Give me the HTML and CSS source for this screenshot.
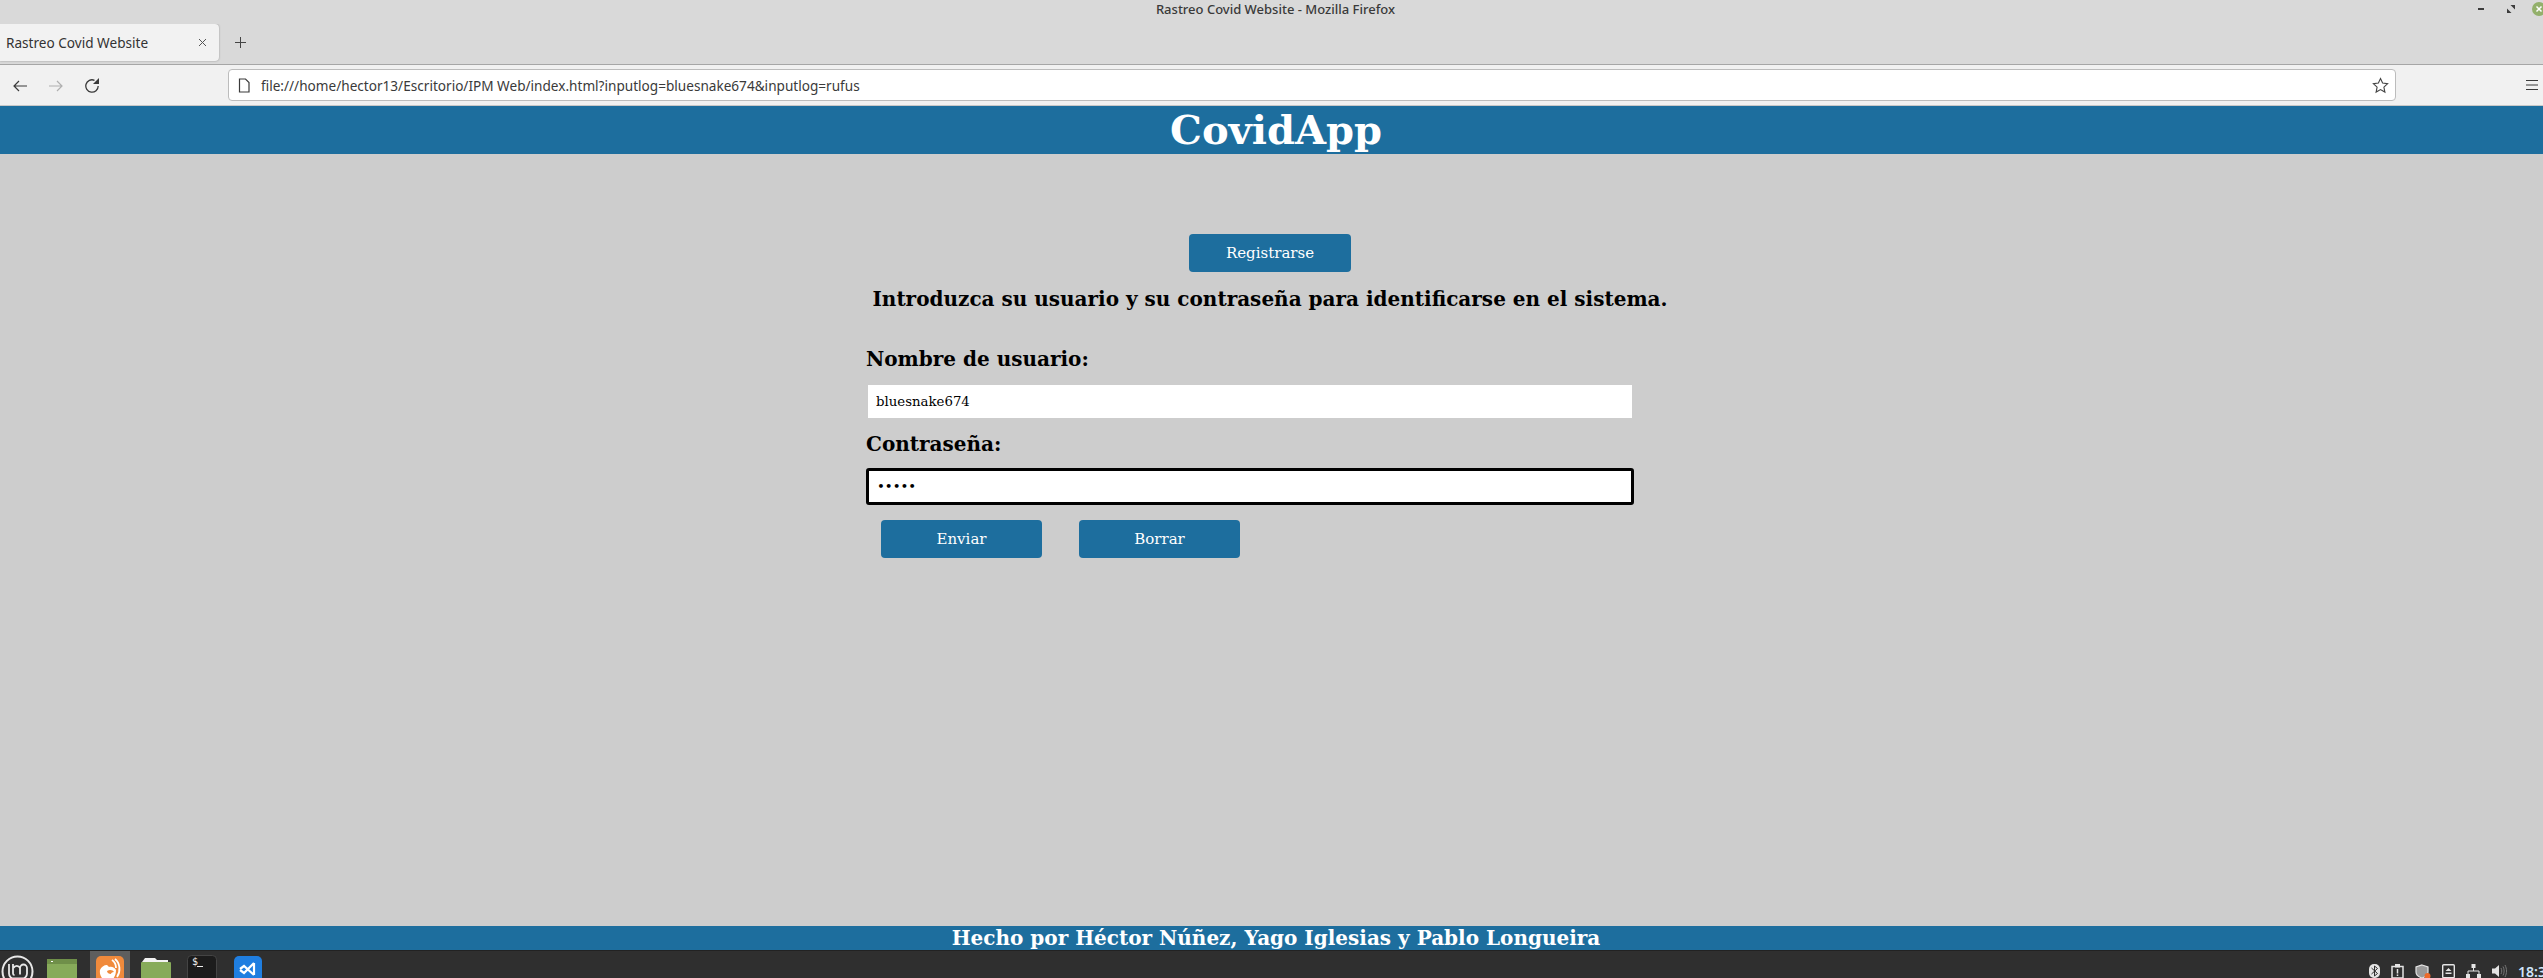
FILE: index.html
```html
<!DOCTYPE html>
<html lang="en">
<head>
    <meta charset="UTF-8">
    <title>Rastreo Covid Website</title>
    <link rel="stylesheet" href="styles.css">
</head>
<body>
    <div class="titlebar">
        <div class="window-title">Rastreo Covid Website - Mozilla Firefox</div>
        <div class="window-buttons">
            <span class="win-min"></span>
            <svg class="win-max" width="8" height="8" viewBox="0 0 8 8"><path d="M0 8V3.500L4.500 8zM8 0v4.500L3.500 0z" fill="#3c3c3c"/></svg>
            <svg class="win-close" width="14" height="14" viewBox="0 0 14 14"><circle cx="7" cy="7" r="7" fill="#93b06b"/><path d="M4.500 4.500l5 5M9.500 4.500l-5 5" stroke="#fff" stroke-width="1.500"/></svg>
        </div>
    </div>
    <div class="tabstrip">
        <div class="tab">
            <span class="tab-title">Rastreo Covid Website</span>
            <svg width="9" height="9" viewBox="0 0 9 9"><path d="M1 1l7 7M8 1L1 8" stroke="#555" fill="none"/></svg>
        </div>
        <svg class="new-tab" width="13" height="13" viewBox="0 0 13 13"><path d="M6.500 1v11M1 6.500h11" stroke="#444" fill="none"/></svg>
    </div>
    <div class="toolbar">
        <div class="nav-icons">
            <svg width="16" height="16" viewBox="0 0 16 16"><path d="M15 9H2M7 4L2 9l5 5" stroke="#3a3a3a" stroke-width="1.200" fill="none"/></svg>
            <svg width="16" height="16" viewBox="0 0 16 16"><path d="M1 9h13M9 4l5 5-5 5" stroke="#b0b0b0" stroke-width="1.200" fill="none"/></svg>
            <svg width="16" height="16" viewBox="0 0 16 16"><path d="M14.200 9A6.200 6.200 0 1 1 10.500 3.300" stroke="#3a3a3a" stroke-width="1.300" fill="none"/><path d="M15 1v6H9z" fill="#3a3a3a"/></svg>
        </div>
        <div class="urlbar">
            <svg width="12" height="15" viewBox="0 0 12 15"><path d="M1.500 1h6l3.500 3.500v9.500h-9.500z" stroke="#3a3a3a" stroke-width="1.200" fill="none"/></svg>
            <span class="url">file:///home/hector13/Escritorio/IPM Web/index.html?inputlog=bluesnake674&amp;inputlog=rufus</span>
            <svg class="star" width="17" height="17" viewBox="0 0 17 17"><path d="M8.500 1.500l2.100 4.600 5 .6-3.700 3.400 1 5-4.400-2.500-4.400 2.500 1-5L1.400 6.700l5-.6z" stroke="#444" stroke-width="1.100" fill="none"/></svg>
        </div>
        <svg class="menu" width="14" height="12" viewBox="0 0 14 12"><path d="M1 1.500h12M1 6h12M1 10.500h12" stroke="#3a3a3a" stroke-width="1.200" fill="none"/></svg>
    </div>

    <div class="page-header">CovidApp</div>

    <div class="main">
        <button class="btn btn-register" type="button">Registrarse</button>
        <h3 class="intro">Introduzca su usuario y su contraseña para identificarse en el sistema.</h3>
        <form class="login-form">
            <label class="field-label" for="user">Nombre de usuario:</label>
            <input class="field" id="user" type="text" value="bluesnake674">
            <label class="field-label label-pass" for="pass">Contraseña:</label>
            <input class="field field-focus" id="pass" type="password" value="rufus">
            <div class="form-buttons">
                <button class="btn" type="button">Enviar</button>
                <button class="btn" type="button">Borrar</button>
            </div>
        </form>
    </div>

    <div class="page-footer">Hecho por Héctor Núñez, Yago Iglesias y Pablo Longueira</div>

    <div class="taskbar">
        <div class="launchers">
            <div class="launcher launcher-mint">
                <svg width="33" height="33" viewBox="0 0 33 33"><circle cx="16.500" cy="16.500" r="15" fill="none" stroke="#e8e8e8" stroke-width="2"/><path d="M8 9v9.500a5 5 0 0 0 5 5h8a5 5 0 0 0 5-5V13a3.500 3.500 0 0 0-7 0v6.500M12 9v9.500a1.500 1.500 0 0 0 1.500 1.500M12.500 13a3.500 3.500 0 0 1 6.500 0" fill="none" stroke="#e8e8e8" stroke-width="1.800"/></svg>
            </div>
            <div class="launcher launcher-files">
                <svg width="32" height="28" viewBox="0 0 32 28"><rect x="1" y="4" width="30" height="24" fill="#87ab5a"/><rect x="1" y="4" width="30" height="5" fill="#6f8f49"/><rect x="5" y="6" width="2" height="1" fill="#fff"/></svg>
            </div>
            <div class="launcher launcher-active">
                <svg width="30" height="28" viewBox="0 0 30 28"><rect x="1" y="1" width="28" height="27" rx="5" fill="#f08a3c"/><path d="M5 15c1-3 4-5 7-5l2 2c3-1 6 1 7 3 0 6-3 11-8 11s-9-5-8-11z" fill="#fff"/><path d="M12 16c3-2 6-1 7 1-2 0-3 1-3 2-2 0-4-1-4-3z" fill="#f08a3c"/><path d="M20 4c5 4 6 12 2 18M17 5c3 2 4 5 4 8" stroke="#fff" stroke-width="1.800" fill="none"/></svg>
            </div>
            <div class="launcher">
                <svg width="32" height="28" viewBox="0 0 32 28"><path d="M2 7l3-4h10l2 2h11v2z" fill="#f2f2f2"/><rect x="1" y="7" width="30" height="21" rx="1" fill="#87ab5a"/></svg>
            </div>
            <div class="launcher">
                <svg width="30" height="28" viewBox="0 0 30 28"><rect x=".5" y=".5" width="29" height="27.500" rx="4" fill="#1c1c1c" stroke="#444"/><rect x="10" y="11" width="6" height="1" fill="#eee"/></svg>
                <span class="term-prompt">$</span>
            </div>
            <div class="launcher">
                <svg width="28" height="28" viewBox="0 0 28 28"><rect y="1" width="28" height="27" rx="5" fill="#1f7ee0"/><path d="M20 8v12M20 8L10 18l-4-3M20 20L10 11l-4 3" stroke="#fff" stroke-width="2.200" fill="none"/></svg>
            </div>
        </div>
        <div class="tray">
            <svg width="11" height="14" viewBox="0 0 11 14"><rect width="11" height="14" rx="5" fill="#e4e4e4"/><path d="M2.500 4l6 5.500L5.500 12V2l3 2.500-6 5.500" stroke="#2e2e2e" fill="none"/></svg>
            <svg width="13" height="14" viewBox="0 0 13 14"><path d="M1 2.500h11V14H1z" fill="none" stroke="#e4e4e4" stroke-width="1.500"/><path d="M4 0h5v3.500H4z" fill="#e4e4e4"/><path d="M6.500 5v4.500M6.500 10.500v1.500" stroke="#e4e4e4" stroke-width="1.500"/></svg>
            <svg width="16" height="15" viewBox="0 0 16 15"><path d="M7 1l6 2v5c0 3-3 5-6 6-3-1-6-3-6-6V3z" fill="#9a9a9a" stroke="#e4e4e4" stroke-width="1.200"/><circle cx="12.500" cy="12" r="3" fill="#ee6a2a"/></svg>
            <svg width="13" height="14" viewBox="0 0 13 14"><rect x=".7" y=".7" width="11.600" height="13" rx="1" fill="none" stroke="#e4e4e4" stroke-width="1.400"/><path d="M3.500 7l3-3 3 3zM3.500 8.500h6v1.500h-6z" fill="#e4e4e4"/></svg>
            <svg width="15" height="14" viewBox="0 0 15 14"><path d="M5.500 0h4v4h-4zM0 10h4v4H0zM11 10h4v4h-4z" fill="#e4e4e4"/><path d="M7.500 4v3M2 10V7h11v3" stroke="#e4e4e4" fill="none"/></svg>
            <svg width="16" height="14" viewBox="0 0 16 14"><path d="M0 4.500h3L7 1v12L3 9.500H0z" fill="#e4e4e4"/><path d="M9 4c1 2 1 4 0 6M11 2.500c1.500 3 1.500 6 0 9M13 1c2 4 2 8 0 12" stroke="#777" fill="none"/></svg>
            <span class="clock">18:3</span>
        </div>
    </div>
</body>
</html>
```

FILE: styles.css
```css
html, body {
    margin: 0;
    padding: 0;
}
body {
    width: 2543px;
    height: 978px;
    overflow: hidden;
    display: flex;
    flex-direction: column;
    background: #cdcdcd;
    font-family: "DejaVu Serif", serif;
}

/* window chrome */
.titlebar {
    height: 24px;
    flex: none;
    display: flex;
    justify-content: center;
    align-items: center;
    position: relative;
    background: #d9d9d9;
}
.window-title {
    font-family: "Noto Sans", sans-serif;
    font-size: 13px;
    font-weight: 500;
    color: #3a3a3a;
    margin: -6px 0 0 8px;
}
.window-buttons {
    position: absolute;
    top: 2px;
    right: -3px;
    display: flex;
    align-items: center;
}
.win-min {
    width: 6px;
    height: 2px;
    margin-right: 23px;
    background: #3c3c3c;
}
.win-max {
    margin-right: 17px;
}
.tabstrip {
    height: 41px;
    flex: none;
    box-sizing: border-box;
    display: flex;
    align-items: flex-start;
    background: #d9d9d9;
    border-bottom: 1px solid #a6a6a6;
}
.tab {
    width: 219px;
    height: 37px;
    flex: none;
    box-sizing: border-box;
    display: flex;
    justify-content: space-between;
    align-items: center;
    padding: 0 12px 0 6px;
    background: #f2f2f2;
    border-radius: 0 4px 4px 0;
    box-shadow: 0 0 2px rgba(0, 0, 0, 0.35);
}
.tab-title {
    font-family: "Noto Sans", sans-serif;
    font-size: 13.6px;
    white-space: nowrap;
    color: #333;
}
.new-tab {
    margin: 12px 0 0 15px;
}
.toolbar {
    height: 41px;
    flex: none;
    box-sizing: border-box;
    display: flex;
    align-items: center;
    background: #f1f1f1;
    border-bottom: 1px solid #c8c8c8;
}
.nav-icons {
    width: 228px;
    flex: none;
    display: flex;
    gap: 20px;
    padding-left: 12px;
    box-sizing: border-box;
}
.urlbar {
    width: 2168px;
    height: 32px;
    flex: none;
    box-sizing: border-box;
    display: flex;
    align-items: center;
    padding: 0 6px 0 9px;
    background: #fff;
    border: 1px solid #bcbcbc;
    border-radius: 4px;
}
.url {
    flex: 1;
    margin-left: 11px;
    font-family: "Noto Sans", sans-serif;
    font-size: 13.6px;
    color: #3a3a3a;
}
.menu {
    margin-left: 129px;
}

/* page */
.page-header {
    height: 48px;
    flex: none;
    padding-left: 9px;
    background: #1d6e9e;
    color: #fff;
    font-size: 40px;
    font-weight: bold;
    line-height: 48px;
    text-align: center;
}
.main {
    flex: 1;
    display: flex;
    flex-direction: column;
    align-items: center;
    padding-top: 80px;
}
.btn {
    width: 161px;
    height: 38px;
    padding: 0;
    border: 0;
    border-radius: 4px;
    background: #1d6e9e;
    color: #fff;
    font-family: "DejaVu Serif", serif;
    font-size: 15px;
}
.btn-register {
    width: 162px;
    margin-left: -3px;
}
.intro {
    margin: 15px 0 0 -3px;
    font-size: 20px;
    line-height: 25px;
    font-weight: bold;
    color: #000;
}
.login-form {
    width: 768px;
    margin: 35px 43px 0 0;
}
.field-label {
    display: block;
    font-size: 20px;
    line-height: 25px;
    font-weight: bold;
    color: #000;
}
.label-pass {
    margin-top: 14px;
}
.field {
    display: block;
    box-sizing: border-box;
    width: 764px;
    height: 33px;
    margin: 13px 0 0 2px;
    padding: 0 8px;
    border: 0;
    background: #fff;
    color: #000;
    font-family: "DejaVu Serif", serif;
    font-size: 13.3px;
}
.field-focus {
    width: 768px;
    height: 37px;
    margin: 11px 0 0;
    padding: 0 8px;
    border: 3px solid #000;
    border-radius: 3px;
}
.form-buttons {
    display: flex;
    gap: 37px;
    margin: 15px 0 0 15px;
}
.page-footer {
    height: 24px;
    flex: none;
    padding-left: 9px;
    background: #1d6e9e;
    color: #fff;
    font-size: 20px;
    font-weight: bold;
    line-height: 24px;
    text-align: center;
}

/* desktop panel */
.taskbar {
    height: 28px;
    flex: none;
    display: flex;
    justify-content: space-between;
    background: #2f2f2f;
    border-top: 1px solid #222;
    box-sizing: border-box;
    overflow: hidden;
}
.launchers {
    display: flex;
}
.launcher {
    width: 40px;
    margin-right: 6px;
    display: flex;
    justify-content: center;
    padding-top: 4px;
    position: relative;
    box-sizing: border-box;
    flex: none;
}
.launcher-mint {
    width: 34px;
    margin-right: 8px;
    justify-content: flex-start;
    padding-left: 1px;
}
.launcher-files {
    margin-right: 8px;
}
.launcher-active {
    background: #5e5e5e;
}
.term-prompt {
    position: absolute;
    left: 10px;
    top: 5px;
    font-family: "DejaVu Sans Mono", monospace;
    font-size: 10px;
    color: #eee;
}
.tray {
    display: flex;
    align-items: flex-start;
    gap: 11px;
    padding-top: 13px;
}
.clock {
    width: 25px;
    margin: -2px 0 0 -1px;
    font-family: "Noto Sans", sans-serif;
    font-size: 14px;
    font-weight: 600;
    white-space: nowrap;
    color: #cfe4fa;
}
```
